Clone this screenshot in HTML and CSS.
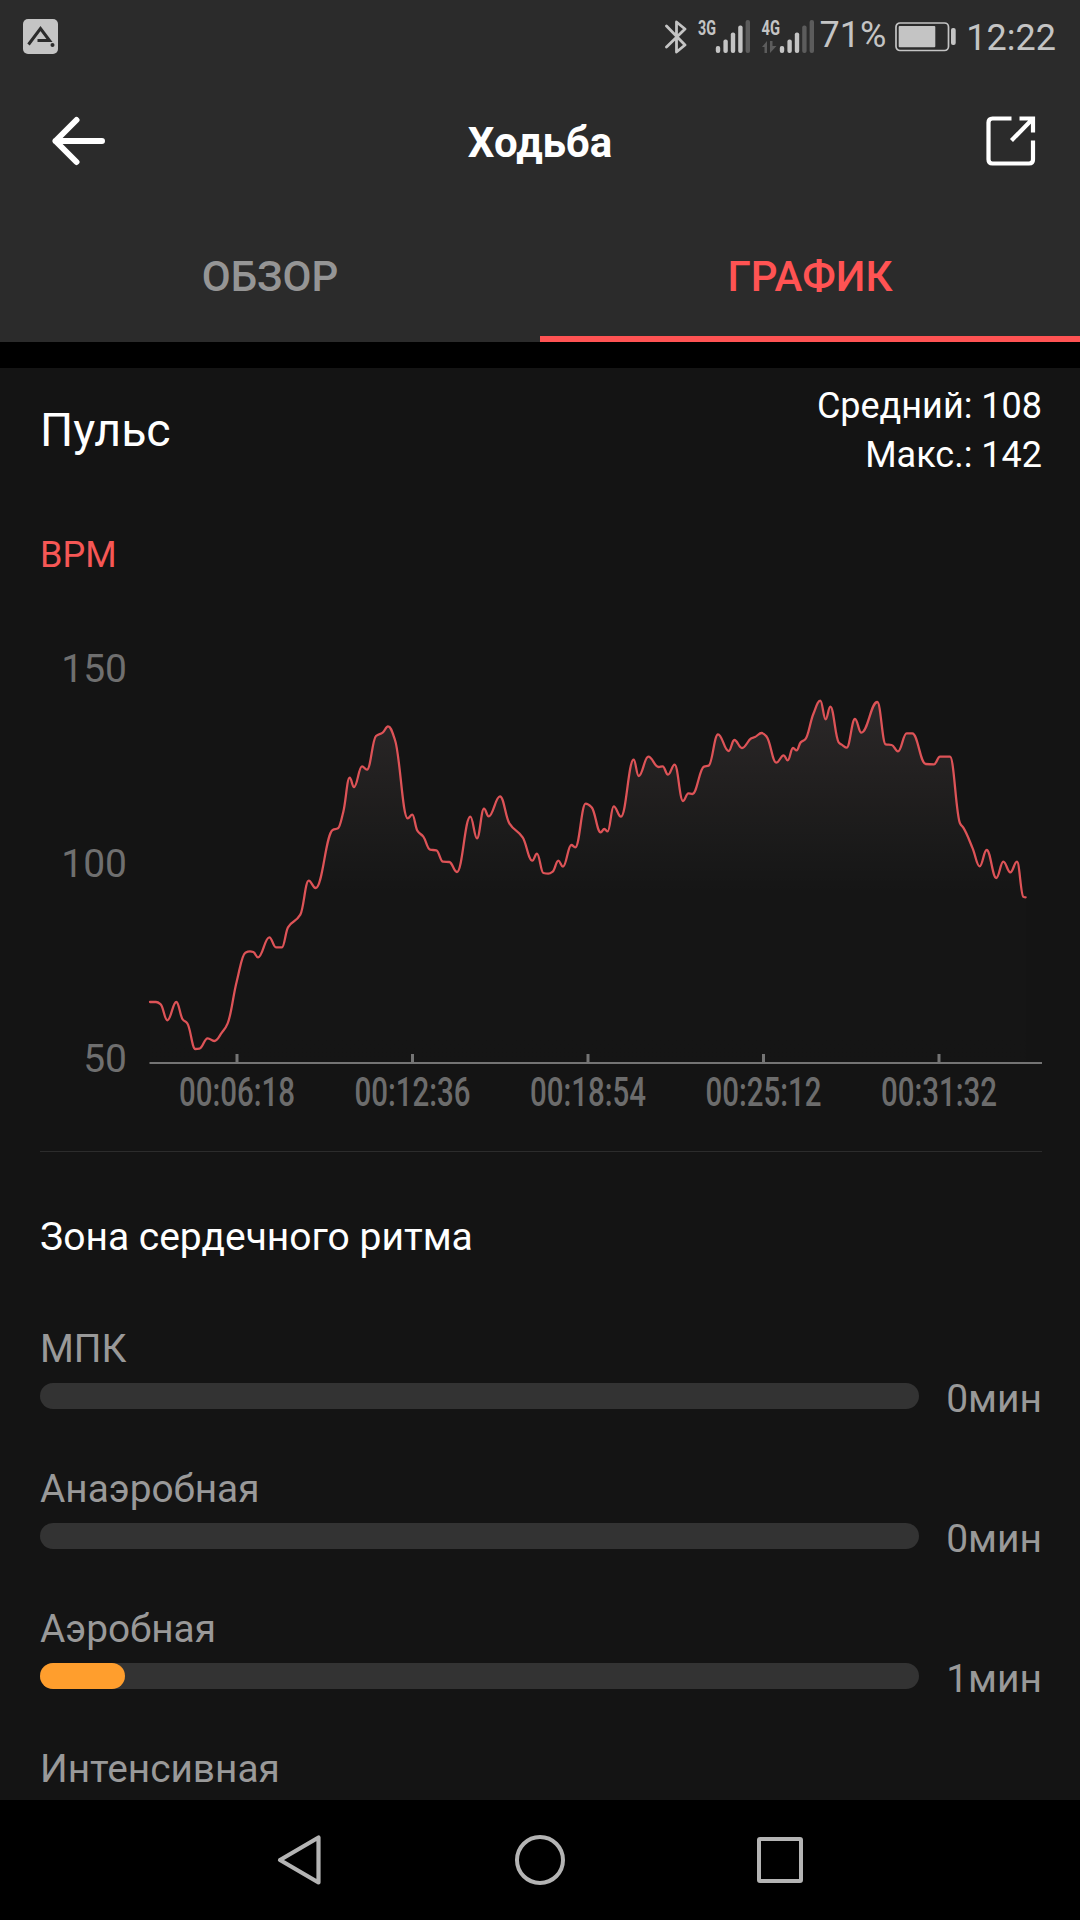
FILE: index.html
```html
<!DOCTYPE html>
<html lang="ru">
<head>
  <meta charset="UTF-8">
  <meta name="viewport" content="width=device-width, initial-scale=1.0">
  <title>Ходьба</title>
  <link rel="stylesheet" href="styles.css">
</head>
<body>
  <div class="status-bar">
    <svg class="app-badge" width="35" height="35" viewBox="0 0 35 35">
      <rect width="35" height="35" rx="5" fill="#c4c4c4"/>
      <path d="M5.5 25.5 L17.5 9.5 L26.5 21.5 H14.5" fill="none" stroke="#2b2b2b" stroke-width="3"/>
      <circle cx="29.5" cy="26" r="2" fill="#2b2b2b"/>
    </svg>
    <div class="status-right">
      <svg class="bluetooth" width="22" height="36" viewBox="0 0 22 36">
        <path d="M1.5 7 L20 26 L11.5 33 V3 L20 10 L1.5 28" fill="none" stroke="#c4c4c4" stroke-width="2.8" stroke-linejoin="round" stroke-linecap="round"/>
      </svg>
      <svg class="signal" width="54" height="44" viewBox="0 -4 54 44">
        <text class="net" x="1" y="15.5" textLength="18" lengthAdjust="spacingAndGlyphs">3G</text>
        <g fill="#c4c4c4">
          <rect x="18.8" y="27" width="4.4" height="7" rx="2"/>
          <rect x="26.4" y="20.5" width="4.4" height="13.5" rx="2"/>
          <rect x="33.8" y="13.5" width="4.4" height="20.5" rx="2"/>
          <rect x="41.2" y="6.5" width="4.4" height="27.5" rx="2"/>
          <rect class="off" x="48.6" y="1" width="4.4" height="33" rx="2"/>
        </g>
      </svg>
      <svg class="signal" width="54" height="44" viewBox="0 -4 54 44">
        <text class="net" x="0.5" y="15.5" textLength="18.5" lengthAdjust="spacingAndGlyphs">4G</text>
        <path class="off" d="M1 28 L6 22 V34 H3.5 V28 Z M9 22 H11.5 V27 H15.5 L9 34 Z"/>
        <g fill="#c4c4c4">
          <rect x="18.8" y="27" width="4.4" height="7" rx="2"/>
          <rect x="26.4" y="20.5" width="4.4" height="13.5" rx="2"/>
          <rect x="33.8" y="13.5" width="4.4" height="20.5" rx="2"/>
          <rect class="off" x="41.2" y="6.5" width="4.4" height="27.5" rx="2"/>
          <rect class="off" x="48.6" y="1" width="4.4" height="33" rx="2"/>
        </g>
      </svg>
      <span class="percent">71%</span>
      <svg class="battery" width="62" height="30" viewBox="0 0 62 30">
        <rect x="1" y="1" width="52.5" height="27.5" rx="4" fill="none" stroke="#c4c4c4" stroke-width="1.7"/>
        <rect x="3.7" y="4" width="36.6" height="21.3" rx="1" fill="#c4c4c4"/>
        <rect x="56" y="6" width="4.7" height="17" rx="2" fill="#c4c4c4"/>
      </svg>
      <span class="clock">12:22</span>
    </div>
  </div>

  <header class="app-bar">
    <svg width="54" height="50" viewBox="0 0 54 50">
      <path d="M24.5 4 L3.5 25 L24.5 46 M3.5 25 H50" fill="none" stroke="#fff" stroke-width="6" stroke-linecap="round" stroke-linejoin="round"/>
    </svg>
    <h1>Ходьба</h1>
    <svg width="50" height="50" viewBox="0 0 50 50">
      <path d="M25.5 2.5 H6.5 Q2.5 2.5 2.5 6.5 V43.5 Q2.5 47.5 6.5 47.5 H43 Q47 47.5 47 43.5 V24.5 M33.5 2.5 H47 V16.5 M47 2.5 L25.5 24.5" fill="none" stroke="#fff" stroke-width="4.2"/>
    </svg>
  </header>

  <nav class="tabs">
    <div class="tab">ОБЗОР</div>
    <div class="tab active">ГРАФИК</div>
  </nav>

  <main>
    <div class="pulse-head">
      <h2>Пульс</h2>
      <div class="pulse-stats">
        <p>Средний: 108</p>
        <p>Макс.: 142</p>
      </div>
    </div>
    <div class="unit">BPM</div>

    <svg class="chart" width="1002" height="520" viewBox="0 0 1002 520">
      <defs>
        <linearGradient id="fade" gradientUnits="userSpaceOnUse" x1="0" y1="60" x2="0" y2="1120">
          <stop offset="0" stop-color="#ffdce4" stop-opacity="0.1"/>
          <stop offset="0.3" stop-color="#ffdcd8" stop-opacity="0.045"/>
          <stop offset="0.54" stop-color="#fff" stop-opacity="0.006"/>
          <stop offset="1" stop-color="#fff" stop-opacity="0.004"/>
        </linearGradient>
      </defs>
      <g class="y-labels">
        <text x="87" y="82">150</text>
        <text x="87" y="277">100</text>
        <text x="87" y="472">50</text>
      </g>
      <g transform="translate(90 80) scale(0.33333)">
        <path id="area" fill="url(#fade)"/>
        <path id="line" fill="none" stroke="#dd5357" stroke-width="6.8" stroke-linecap="round"/>
      </g>
      <path class="axis" d="M109.5 463 H1002"/>
      <g id="ticks"></g>
    </svg>

    <section class="zones">
      <h3>Зона сердечного ритма</h3>
      <div class="zone">
        <div class="zone-name">МПК</div>
        <div class="zone-row">
          <div class="bar"></div>
          <span class="zone-time">0мин</span>
        </div>
      </div>
      <div class="zone">
        <div class="zone-name">Анаэробная</div>
        <div class="zone-row">
          <div class="bar"></div>
          <span class="zone-time">0мин</span>
        </div>
      </div>
      <div class="zone">
        <div class="zone-name">Аэробная</div>
        <div class="zone-row">
          <div class="bar"><div class="fill" style="width: 9.7%"></div></div>
          <span class="zone-time">1мин</span>
        </div>
      </div>
      <div class="zone">
        <div class="zone-name">Интенсивная</div>
      </div>
    </section>
  </main>

  <footer class="nav-bar">
    <svg width="50" height="54" viewBox="0 0 50 54">
      <path d="M43.5 4.5 V49.5 L5 27 Z" fill="none" stroke="#b4b4b4" stroke-width="4.2" stroke-linejoin="round"/>
    </svg>
    <svg width="54" height="54" viewBox="0 0 54 54">
      <circle cx="27" cy="27" r="23" fill="none" stroke="#b4b4b4" stroke-width="4"/>
    </svg>
    <svg width="50" height="54" viewBox="0 0 50 54">
      <rect x="4" y="6" width="42" height="42" rx="1" fill="none" stroke="#b4b4b4" stroke-width="4"/>
    </svg>
  </footer>

  <script>
    // heart rate samples, [x, y] in plot units
    var points = [
      [60,966],[78,966],[92,973],[112,1021],[139,966],[158,1018],[172,1030],[196,1107],[208,1106],[233,1075],
      [253,1083],[276,1057],[293,1030],[320,905],[346,818],[360,814],[370,816],[384,832],[418,772],[438,802],
      [456,802],[474,742],[511,704],[536,602],[557,624],[608,450],[624,445],[640,395],[659,293],[672,321],
      [696,259],[711,269],[738,168],[758,158],[774,139],[795,180],[833,415],[847,404],[862,452],[880,470],
      [900,509],[919,511],[939,545],[958,546],[981,576],[1021,410],[1041,475],[1062,386],[1076,409],[1110,349],
      [1138,430],[1178,472],[1207,542],[1221,521],[1240,579],[1255,581],[1268,575],[1285,542],[1299,560],[1324,495],
      [1336,502],[1367,371],[1385,382],[1412,457],[1423,447],[1433,454],[1451,379],[1473,410],[1511,239],[1526,288],
      [1555,230],[1586,261],[1598,259],[1614,284],[1634,254],[1659,363],[1675,340],[1687,342],[1722,260],[1736,257],
      [1764,163],[1796,213],[1813,180],[1836,204],[1864,175],[1875,171],[1895,159],[1910,170],[1939,248],[1961,226],
      [1973,241],[1989,204],[2000,211],[2012,187],[2026,178],[2050,102],[2071,62],[2087,118],[2101,80],[2126,187],
      [2138,196],[2150,203],[2175,117],[2194,158],[2242,66],[2267,193],[2285,195],[2304,214],[2330,160],[2347,160],
      [2387,252],[2412,253],[2430,230],[2460,230],[2490,430],[2500,443],[2528,505],[2549,559],[2570,510],[2599,594],
      [2620,545],[2641,577],[2661,545],[2680,650],[2687,652]
    ];
    var n = points.length;

    function slope(i) {
      return (points[i + 1][1] - points[i][1]) / (points[i + 1][0] - points[i][0]);
    }

    // flat tangent at peaks and dips, harmonic mean elsewhere
    function tangent(i) {
      if (i === 0 || i === n - 1) return 0;
      var a = slope(i - 1), b = slope(i);
      return a * b <= 0 ? 0 : 2 * a * b / (a + b);
    }

    var d = "M" + points[0];
    for (var i = 0; i < n - 1; i++) {
      var p = points[i], q = points[i + 1];
      var h = (q[0] - p[0]) * 0.41;
      d += " C" + [p[0] + h, p[1] + h * tangent(i), q[0] - h, q[1] - h * tangent(i + 1), q[0], q[1]];
    }
    document.getElementById("line").setAttribute("d", d);
    document.getElementById("area").setAttribute("d", d + " V1147 H60 Z");

    // time axis
    var times = ["00:06:18", "00:12:36", "00:18:54", "00:25:12", "00:31:32"];
    document.getElementById("ticks").innerHTML = times.map(function (t, i) {
      var x = 197 + i * 175.5;
      return '<path class="tick" d="M' + x + ' 454 V463"/>' +
        '<text class="time" x="' + (x - 58) + '" y="505.5" textLength="116" lengthAdjust="spacingAndGlyphs">' + t + '</text>';
    }).join("");
  </script>
</body>
</html>
```
FILE: styles.css
```css
* {
  box-sizing: border-box;
  margin: 0;
  padding: 0;
}
body {
  font-family: Roboto, "Noto Sans", sans-serif;
  background-color: #000;
  color: #fff;
  width: 1080px;
  height: 1920px;
  overflow: hidden;
}
svg {
  display: block;
}
.status-bar {
  display: flex;
  justify-content: space-between;
  align-items: center;
  height: 72px;
  padding: 1px 24px 0 23px;
  background-color: #2b2b2b;
  color: #c4c4c4;
  font-size: 36px;
}
.status-right {
  display: flex;
  align-items: center;
}
.bluetooth {
  margin-right: 10px;
}
.signal {
  margin-right: 10px;
}
.signal .off {
  fill: #5c5c5c;
}
.signal + .percent {
  margin-left: -5px;
}
.net {
  font-size: 20px;
  font-weight: 700;
  fill: #c4c4c4;
}
.percent {
  line-height: 40px;
  margin-bottom: 4px;
}
.battery {
  margin: 0 9px;
}
.clock {
  line-height: 40px;
  margin-top: 2px;
}
.app-bar {
  display: flex;
  align-items: center;
  height: 139px;
  padding: 0 44px 1px 52px;
  background-color: #2b2b2b;
}
.app-bar h1 {
  flex: 1;
  margin-left: -12px;
  padding-top: 3px;
  font-size: 42px;
  font-weight: 700;
  line-height: 50px;
  text-align: center;
}
.tabs {
  display: flex;
  height: 131px;
  background-color: #2b2b2b;
}
.tab {
  flex: 1;
  text-align: center;
  font-size: 42px;
  font-weight: 500;
  line-height: 131px;
  color: #959595;
}
.tab.active {
  color: #ff5353;
  box-shadow: inset 0 -6px #ff5353;
}
main {
  height: 1432px;
  margin-top: 26px;
  padding: 0 38px 0 40px;
  background-color: #141414;
  overflow: hidden;
}
.pulse-head {
  display: flex;
  justify-content: space-between;
  align-items: center;
  height: 125px;
}
.pulse-head h2 {
  padding-bottom: 2px;
  font-size: 46.5px;
  font-weight: 400;
}
.pulse-stats {
  font-size: 36px;
  line-height: 49px;
  text-align: right;
}
.unit {
  margin: 41px 0 24px;
  font-size: 36px;
  line-height: 42px;
  color: #f65755;
}
.y-labels text {
  font-size: 39px;
  text-anchor: end;
  fill: #6f6f6f;
}
.time {
  font-size: 41px;
  font-weight: 500;
  fill: #6c6c6c;
}
.axis {
  stroke: #747474;
  stroke-width: 2;
}
.tick {
  stroke: #747474;
  stroke-width: 3;
}
.zones {
  margin-top: 31px;
  padding-top: 62px;
  border-top: 1px solid #2c2c2c;
}
.zones h3 {
  font-size: 39px;
  font-weight: 400;
  line-height: 46px;
  margin-bottom: 66px;
}
.zone {
  height: 140px;
  font-size: 39px;
  line-height: 46px;
  color: #999;
}
.zone-name {
  font-size: 38.8px;
}
.zone-row {
  display: flex;
  justify-content: space-between;
  align-items: center;
  height: 46px;
  margin-top: 1px;
}
.zone-time {
  margin-top: 5px;
}
.bar {
  width: 879px;
  height: 26px;
  border-radius: 13px;
  background-color: #333;
}
.fill {
  height: 100%;
  border-radius: 13px;
  background-color: #ff9e2d;
}
.nav-bar {
  display: flex;
  justify-content: center;
  align-items: center;
  gap: 188px;
  height: 120px;
}
```
